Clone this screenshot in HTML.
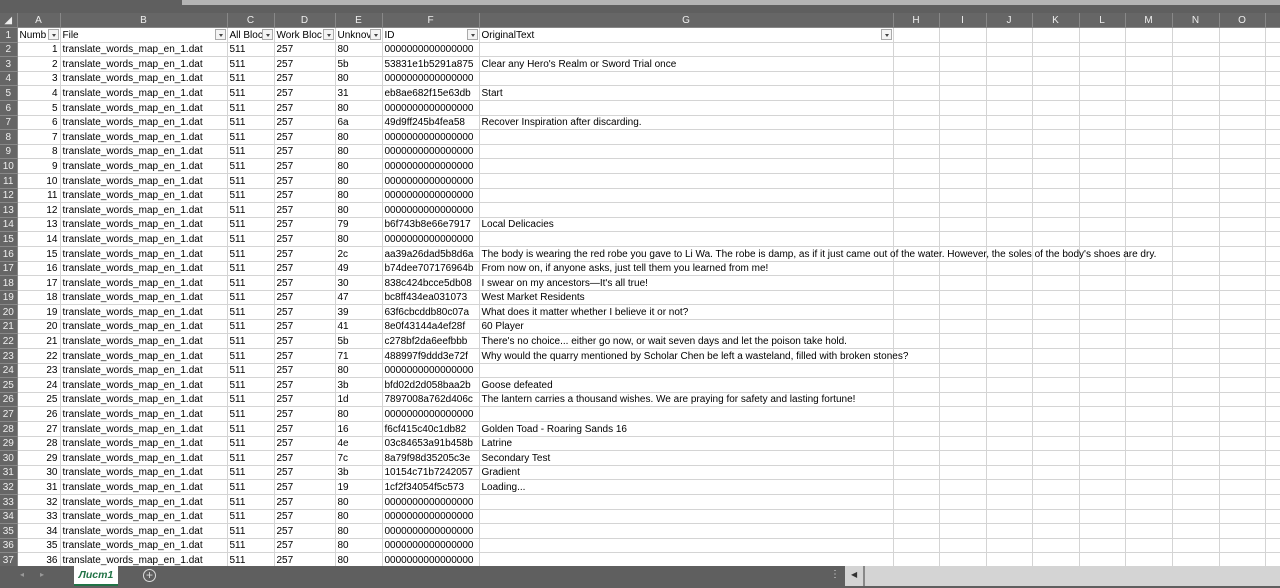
<!DOCTYPE html>
<html><head><meta charset="utf-8"><style>
*{margin:0;padding:0;box-sizing:border-box}
body{width:1280px;height:588px;overflow:hidden;background:#fff;font-family:"Liberation Sans",sans-serif;font-size:10px;color:#000;position:relative}
#top{position:absolute;left:0;top:0;width:1280px;height:13px;background:#5f5f5f}
#top div{position:absolute;left:182px;top:0;width:1098px;height:5px;background:#b4b4b4}
table{position:absolute;left:0;top:13px;border-collapse:collapse;table-layout:fixed;width:1280px}
td{height:14.6px;border-right:1px solid #d4d4d4;border-bottom:1px solid #d4d4d4;white-space:nowrap;overflow:hidden;padding:0 2px;line-height:13px;vertical-align:bottom}
tr.h td{background:#666;color:#eee;text-align:center;border-color:#888;height:14.5px;font-size:10px}
td.r{background:#666;color:#eee;text-align:center;border-color:#888;font-size:10px;padding:0}
td.n{text-align:right}
tr.hd td:not(.r){position:relative}
.dd{position:absolute;right:1px;top:1px;width:11px;height:11px;border:1px solid #aaa;background:#f4f4f4}
.dd:after{content:"";position:absolute;left:3px;top:4px;border-left:2.5px solid transparent;border-right:2.5px solid transparent;border-top:3px solid #444}
#tabs{position:absolute;left:0;top:566px;width:1280px;height:22px;background:#5f5f5f}
#tab{position:absolute;left:74px;top:0;width:44px;height:20px;background:#fff;color:#217346;font-weight:bold;font-style:italic;text-align:center;line-height:19px;font-size:10.5px;border-bottom:2px solid #217346}
#plus{position:absolute;left:143px;top:3px;width:13px;height:13px;border:1.5px solid #ddd;border-radius:50%;color:#ddd;font-size:12px;line-height:10px;text-align:center}
#sb{position:absolute;left:845px;top:0;width:435px;height:20px;background:#d4d4d4}
#sbl{position:absolute;left:845px;top:0;width:20px;height:20px;background:#d4d4d4;border-right:2px solid #888}
</style></head><body>
<div id="top"><div></div></div>
<table>
<colgroup><col style="width:17px"><col style="width:43px"><col style="width:167px"><col style="width:47px"><col style="width:61px"><col style="width:47px"><col style="width:97px"><col style="width:414px"><col style="width:46px"><col style="width:47px"><col style="width:46px"><col style="width:47px"><col style="width:46px"><col style="width:47px"><col style="width:47px"><col style="width:46px"><col style="width:15px"></colgroup>
<tr class="h"><td>◢</td><td>A</td><td>B</td><td>C</td><td>D</td><td>E</td><td>F</td><td>G</td><td>H</td><td>I</td><td>J</td><td>K</td><td>L</td><td>M</td><td>N</td><td>O</td><td></td></tr>
<tr class="hd"><td class="r">1</td><td>Numb<span class="dd"></span></td><td>File<span class="dd"></span></td><td>All Bloc<span class="dd"></span></td><td>Work Bloc<span class="dd"></span></td><td>Unknov<span class="dd"></span></td><td>ID<span class="dd"></span></td><td>OriginalText<span class="dd"></span></td><td></td><td></td><td></td><td></td><td></td><td></td><td></td><td></td><td></td></tr>
<script>
var d=[["80","0000000000000000",""],["5b","53831e1b5291a875","Clear any Hero's Realm or Sword Trial once"],["80","0000000000000000",""],["31","eb8ae682f15e63db","Start"],["80","0000000000000000",""],["6a","49d9ff245b4fea58","Recover Inspiration after discarding."],["80","0000000000000000",""],["80","0000000000000000",""],["80","0000000000000000",""],["80","0000000000000000",""],["80","0000000000000000",""],["80","0000000000000000",""],["79","b6f743b8e66e7917","Local Delicacies"],["80","0000000000000000",""],["2c","aa39a26dad5b8d6a","The body is wearing the red robe you gave to Li Wa. The robe is damp, as if it just came out of the water. However, the soles of the body's shoes are dry."],["49","b74dee707176964b","From now on, if anyone asks, just tell them you learned from me!"],["30","838c424bcce5db08","I swear on my ancestors—It's all true!"],["47","bc8ff434ea031073","West Market Residents"],["39","63f6cbcddb80c07a","What does it matter whether I believe it or not?"],["41","8e0f43144a4ef28f","60 Player"],["5b","c278bf2da6eefbbb","There's no choice... either go now, or wait seven days and let the poison take hold."],["71","488997f9ddd3e72f","Why would the quarry mentioned by Scholar Chen be left a wasteland, filled with broken stones?"],["80","0000000000000000",""],["3b","bfd02d2d058baa2b","Goose defeated"],["1d","7897008a762d406c","The lantern carries a thousand wishes. We are praying for safety and lasting fortune!"],["80","0000000000000000",""],["16","f6cf415c40c1db82","Golden Toad - Roaring Sands 16"],["4e","03c84653a91b458b","Latrine"],["7c","8a79f98d35205c3e","Secondary Test"],["3b","10154c71b7242057","Gradient"],["19","1cf2f34054f5c573","Loading..."],["80","0000000000000000",""],["80","0000000000000000",""],["80","0000000000000000",""],["80","0000000000000000",""],["80","0000000000000000",""]];
for(var i=0;i<d.length;i++){document.write('<tr><td class="r">'+(i+2)+'</td><td class="n">'+(i+1)+'</td><td>translate_words_map_en_1.dat</td><td>511</td><td>257</td><td>'+d[i][0]+'</td><td>'+d[i][1]+'</td><td style="overflow:visible">'+d[i][2]+'</td><td></td><td></td><td></td><td></td><td></td><td></td><td></td><td></td><td></td></tr>');}
</script>
</table>
<div id="tabs"><span style="position:absolute;left:20px;top:4px;color:#999;font-size:8px">◂</span><span style="position:absolute;left:40px;top:4px;color:#999;font-size:8px">▸</span><div id="tab">Лист1</div><div id="plus">+</div><span style="position:absolute;left:830px;top:3px;color:#ddd;font-size:10px">⋮</span><div id="sb"></div><div id="sbl"><span style="position:absolute;left:6px;top:4px;font-size:8px;color:#333">◀</span></div></div>
</body></html>
